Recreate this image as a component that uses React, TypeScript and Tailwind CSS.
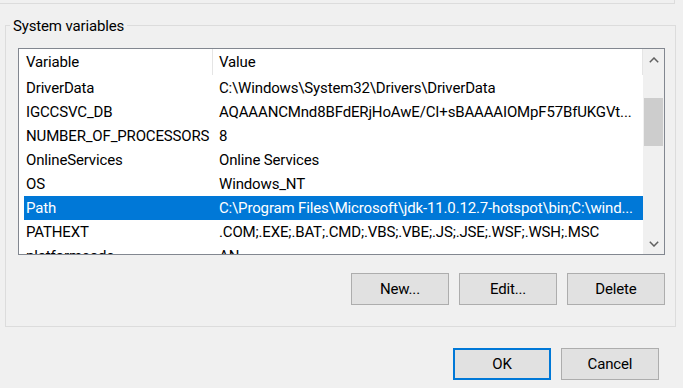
import React from "react";

const rows: [string, string][] = [
  ["DriverData", "C:\\Windows\\System32\\Drivers\\DriverData"],
  ["IGCCSVC_DB", "AQAAANCMnd8BFdERjHoAwE/CI+sBAAAAIOMpF57BfUKGVt..."],
  ["NUMBER_OF_PROCESSORS", "8"],
  ["OnlineServices", "Online Services"],
  ["OS", "Windows_NT"],
  ["Path", "C:\\Program Files\\Microsoft\\jdk-11.0.12.7-hotspot\\bin;C:\\wind..."],
  ["PATHEXT", ".COM;.EXE;.BAT;.CMD;.VBS;.VBE;.JS;.JSE;.WSF;.WSH;.MSC"],
  ["platformcode", "AN"],
];

function Btn({ label, primary }: { label: string; primary?: boolean }) {
  return (
    <div
      className={
        primary
          ? "w-[98px] h-[32px] flex items-center justify-center bg-[#e1e1e1] border-2 border-[#0078d7]"
          : "w-[98px] h-[32px] flex items-center justify-center bg-[#e1e1e1] border border-[#adadad]"
      }
    >
      {label}
    </div>
  );
}

export default function App() {
  return (
    <div className="w-[683px] h-[388px] bg-[#f0f0f0] overflow-hidden text-[15px] tracking-[-0.15px] text-black font-['Roboto',sans-serif]">
      <div className="w-[675px] h-[4px] border-r border-b border-[#dcdcdc]" />
      <div className="relative ml-[5px] mt-[21px] w-[671px] h-[302px] border border-[#dcdcdc]">
        <span className="absolute left-[4px] top-[-10px] px-[3px] bg-[#f0f0f0] leading-[20px]">
          System variables
        </span>
        <div className="ml-[12px] mt-[22px] w-[647px] h-[207px] border border-[#828790] bg-white flex overflow-hidden">
          <div className="w-[624px] flex flex-col overflow-hidden">
            <div className="h-[27px] shrink-0 flex">
              <div className="w-[194px] pl-[7px] flex items-center border-r border-[#e5e5e5] h-[26px]">
                Variable
              </div>
              <div className="w-[430px] pl-[6px] flex items-center border-r border-[#e5e5e5] h-[26px]">
                Value
              </div>
            </div>
            {rows.map(([k, v]) => {
              const sel = k === "Path";
              return (
                <div
                  key={k}
                  className={
                    sel
                      ? "ml-[5px] w-[619px] h-[24px] shrink-0 flex items-center bg-[#0078d7] text-white"
                      : "ml-[5px] w-[619px] h-[24px] shrink-0 flex items-center"
                  }
                >
                  <div className="w-[189px] pl-[2px] whitespace-nowrap overflow-hidden">{k}</div>
                  <div className="w-[430px] pl-[6px] whitespace-nowrap overflow-hidden">{v}</div>
                </div>
              );
            })}
          </div>
          <div className="w-[21px] bg-[#f0f0f0] flex flex-col">
            <div className="h-[21px] flex items-center justify-center">
              <svg width="10" height="6" viewBox="0 0 10 6">
                <polyline points="0.8,5.2 5,1 9.2,5.2" fill="none" stroke="#606060" strokeWidth="1.5" />
              </svg>
            </div>
            <div className="flex-1 pt-[28px]">
              <div className="ml-[1px] w-[19px] h-[48px] bg-[#cdcdcd]" />
            </div>
            <div className="h-[21px] flex items-center justify-center">
              <svg width="10" height="6" viewBox="0 0 10 6">
                <polyline points="0.8,0.8 5,5 9.2,0.8" fill="none" stroke="#606060" strokeWidth="1.5" />
              </svg>
            </div>
          </div>
        </div>
        <div className="ml-[12px] mt-[18px] w-[647px] flex justify-end gap-[10px]">
          <Btn label="New..." />
          <Btn label="Edit..." />
          <Btn label="Delete" />
        </div>
      </div>
      <div className="mt-[21px] flex justify-end gap-[10px] pr-[24px]">
        <Btn label="OK" primary />
        <Btn label="Cancel" />
      </div>
    </div>
  );
}
